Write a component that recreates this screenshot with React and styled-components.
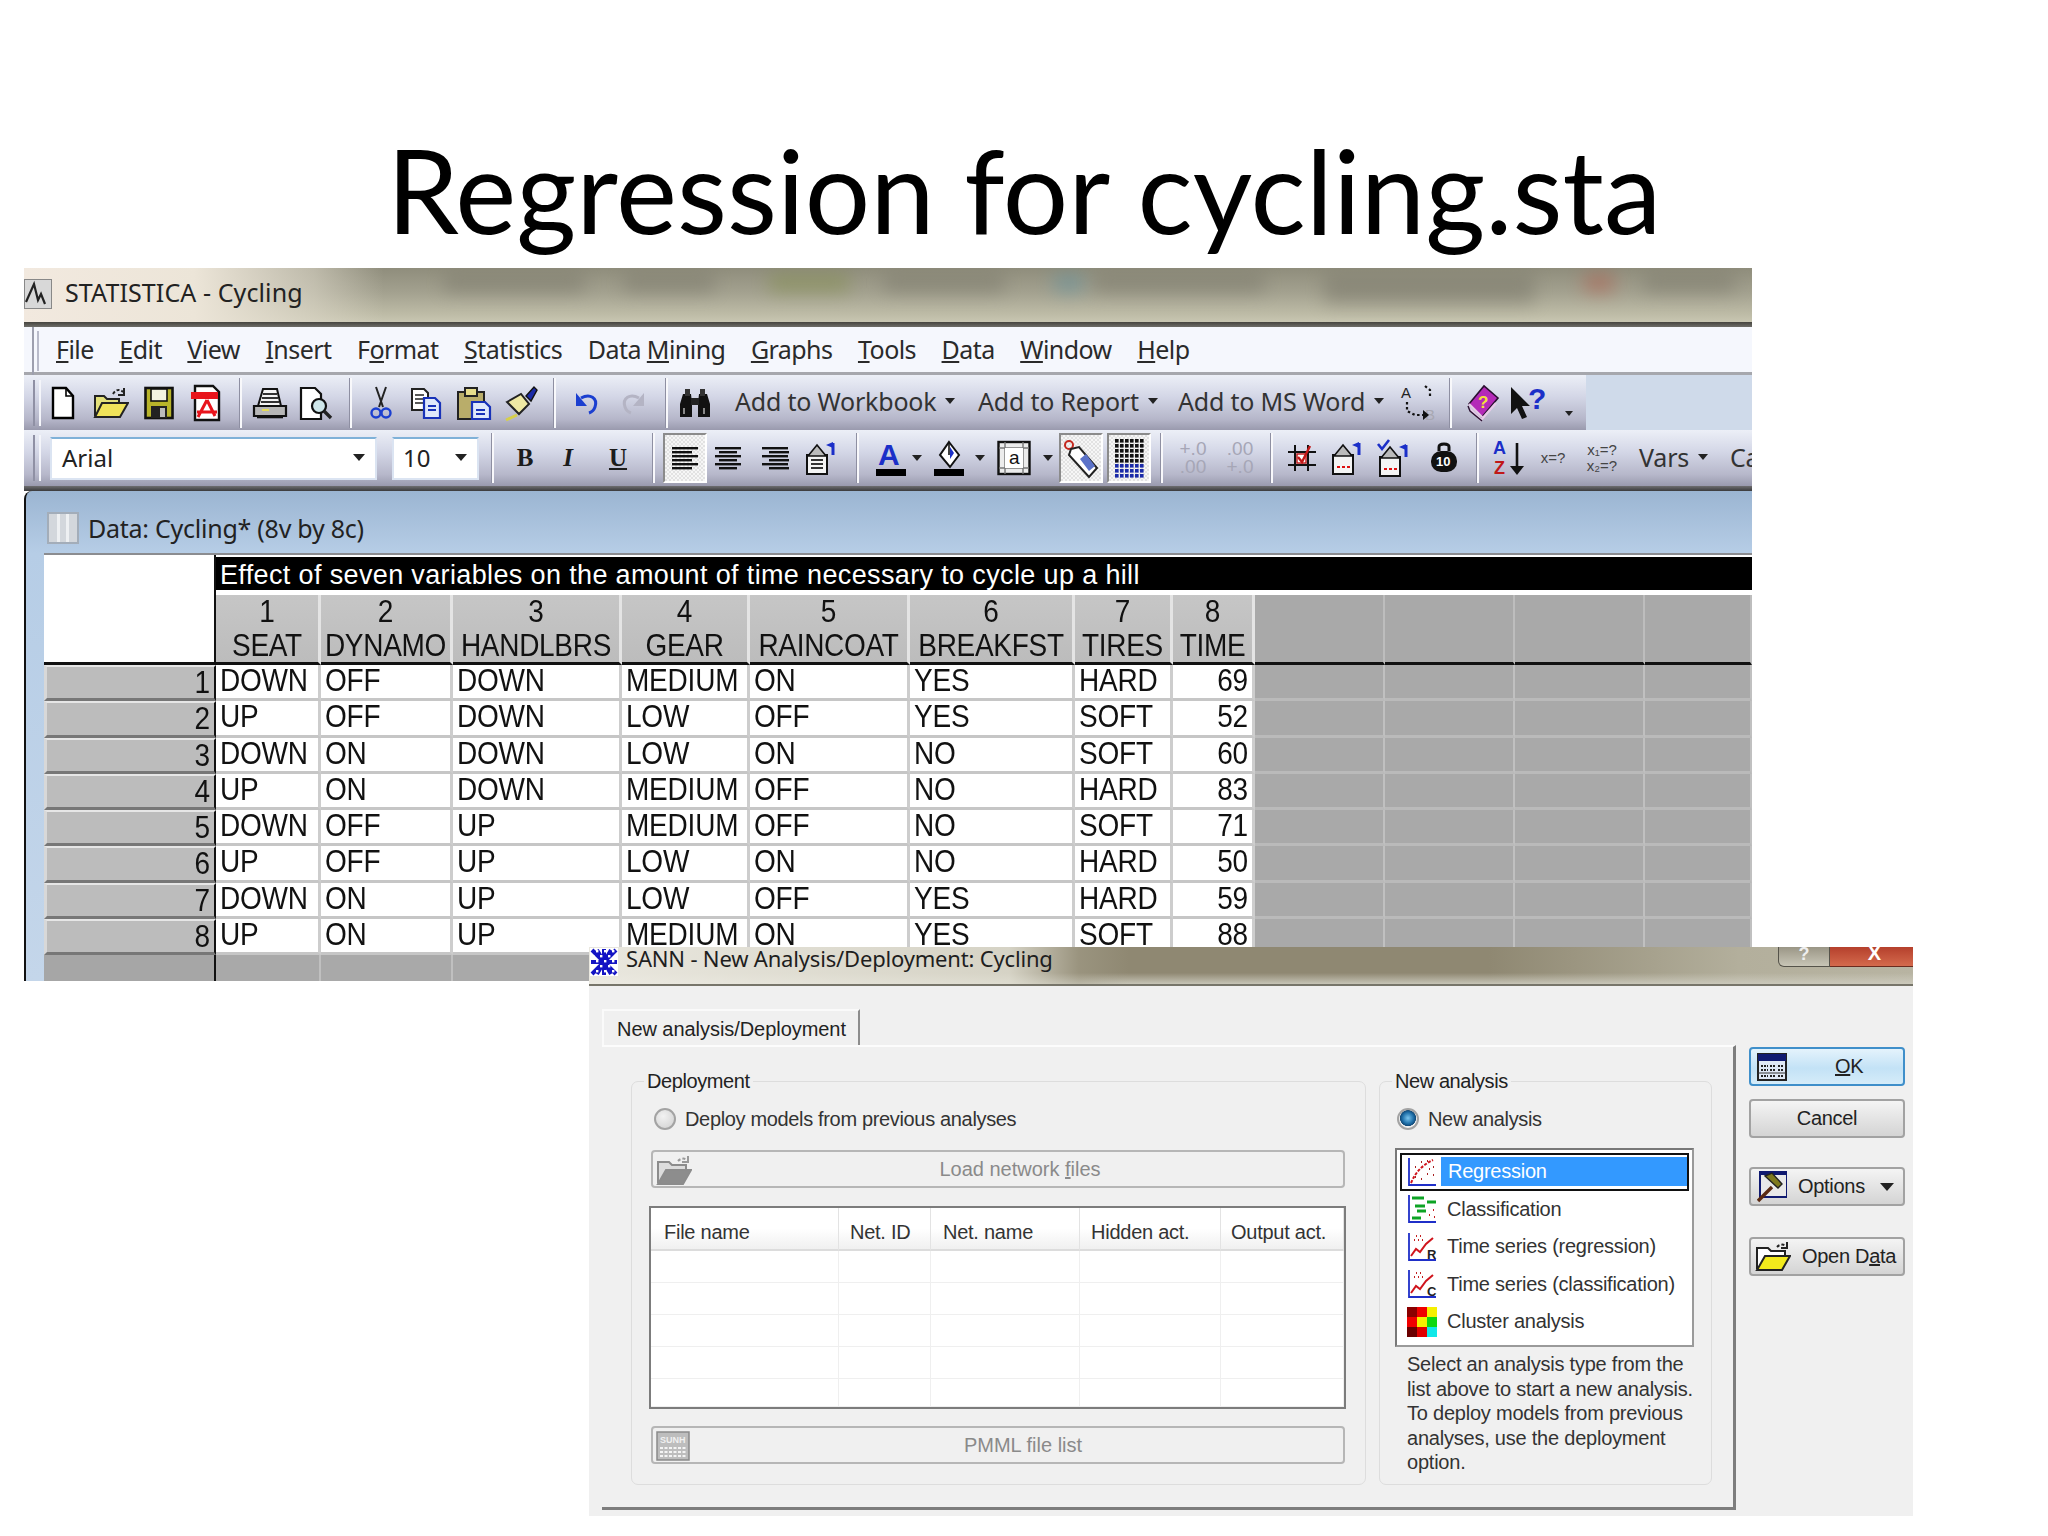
import React from "react";
import styled, { createGlobalStyle } from "styled-components";

const GlobalStyle = createGlobalStyle`
  html, body { margin: 0; padding: 0; background: #fff; }
  body { font-family: "Liberation Sans", Arial, sans-serif; color: #111; }
  * { box-sizing: border-box; }
`;

const Stage = styled.div`
  position: relative;
  width: 2048px;
  height: 1536px;
  overflow: hidden;
  background: #fff;
`;

const Heading = styled.h1`
  margin: 0;
  height: 268px;
  padding-top: 125px;
  text-align: center;
  font-family: Lato, "Noto Sans", sans-serif;
  font-weight: 400;
  font-size: 115.5px;
  line-height: 130px;
  color: #000;
`;

/* main STATISTICA window */
const MainWindow = styled.div`
  width: 1728px;
  height: 713px;
  margin-left: 24px;
  overflow: hidden;
  display: flex;
  flex-direction: column;
  font-family: "Noto Sans", sans-serif;
`;

const AppTitleBar = styled.div`
  position: relative;
  flex: none;
  height: 54px;
  display: flex;
  align-items: center;
  overflow: hidden;
  background: linear-gradient(180deg, #8f8d7c 0%, #a3a18f 45%, #bdbba6 85%, #c8c6b2 100%);
`;

const Glow = styled.div`
  position: absolute;
  left: 0;
  top: 0;
  bottom: 0;
  width: 360px;
  background: linear-gradient(90deg, #f2e9df 0, #ece5d8 170px, rgba(220, 215, 200, 0.6) 290px, rgba(200, 195, 175, 0) 360px);
`;

const Smudge = styled.div`
  position: absolute;
  top: ${(p) => p.$top || 6}px;
  left: ${(p) => p.$x}px;
  width: ${(p) => p.$w}px;
  height: ${(p) => p.$h || 18}px;
  background: ${(p) => p.$c || "#6f6d60"};
  opacity: 0.42;
  filter: blur(9px);
`;

const AppIcon = styled.div`
  position: relative;
  flex: none;
  width: 28px;
  height: 30px;
  margin-top: -2px;
  background: #d8d8d8;
  border: 1px solid #888;
`;

const AppTitle = styled.span`
  position: relative;
  margin: -6px 0 0 13px;
  font-size: 25px;
  letter-spacing: 0.1px;
  color: #222;
`;

const MenuBar = styled.div`
  flex: none;
  height: 53px;
  padding-top: 5px;
  display: flex;
  align-items: flex-start;
  background: linear-gradient(180deg, #45443f 0, #6e6d68 5px, #f5f7fd 5px, #f5f7fd 50px, #a6a7ad 50px);
`;

const Grip = styled.div`
  flex: none;
  width: 15px;
  height: 100%;
  margin-left: 8px;
  border-left: 2px solid #9d9fae;
  position: relative;
  &::after {
    content: "";
    position: absolute;
    left: 3px;
    top: 4px;
    bottom: 4px;
    width: 2px;
    background: #b9bbca;
  }
`;

const MenuList = styled.div`
  display: flex;
  align-items: center;
  height: 43px;
  padding-left: 9px;
  gap: 25.5px;
  font-size: 25px;
  letter-spacing: -0.55px;
  color: #2a2a2a;
`;

const ToolRow = styled.div`
  flex: none;
  height: ${(p) => p.$h || 55}px;
  display: flex;
  align-items: center;
  overflow: hidden;
  background: ${(p) => (p.$flat ? "#cfdaea" : "linear-gradient(180deg, #eceff7 0%, #d3d6e6 40%, #b6b7ca 80%, #9a9aae 100%)")};
`;

const ToolGroup = styled.div`
  flex: none;
  height: 100%;
  display: flex;
  align-items: center;
  background: linear-gradient(180deg, #eceff7 0%, #d3d6e6 40%, #b6b7ca 80%, #9a9aae 100%);
`;

const ToolGrip = styled.div`
  flex: none;
  width: 15px;
  height: 46px;
  padding-left: 9px;
  &::before {
    content: "";
    display: block;
    width: 4px;
    height: 100%;
    border-left: 2px solid #8f90a4;
    border-right: 2px solid #f4f5fa;
  }
`;

const ToolSlot = styled.div`
  flex: none;
  width: ${(p) => p.$w}px;
  height: 46px;
  padding-top: ${(p) => p.$low || 0}px;
  display: flex;
  align-items: center;
  justify-content: center;
`;

const ToggleFace = styled.div`
  width: 44px;
  height: 50px;
  display: flex;
  align-items: center;
  justify-content: center;
  background: repeating-conic-gradient(#f6f6f6 0% 25%, #e2e2e2 0% 50%) 0 0 / 4px 4px;
  border: 2px solid #fff;
  border-top-color: #8b8b8b;
  border-left-color: #8b8b8b;
`;

const ToolSep = styled.div`
  flex: none;
  width: ${(p) => p.$w}px;
  height: 50px;
  display: flex;
  justify-content: center;
  &::before {
    content: "";
    width: 3px;
    height: 100%;
    background: linear-gradient(90deg, #8e8fa2 0 1px, #f8f8fb 1px);
  }
`;

const ToolText = styled.div`
  flex: none;
  width: ${(p) => p.$w}px;
  padding: 0 0 3px ${(p) => p.$pad}px;
  display: flex;
  align-items: center;
  gap: 9px;
  font-size: 25px;
  letter-spacing: -0.2px;
  white-space: nowrap;
  color: #333;
`;

const Caret = styled.i`
  flex: none;
  width: 0;
  height: 0;
  border-left: ${(p) => p.$s || 5}px solid transparent;
  border-right: ${(p) => p.$s || 5}px solid transparent;
  border-top: ${(p) => (p.$s || 5) + 1}px solid #222;
`;

const Combo = styled.div`
  flex: none;
  width: ${(p) => p.$w}px;
  height: 43px;
  margin-left: ${(p) => p.$ml}px;
  padding: 0 10px 2px ${(p) => p.$pl}px;
  display: flex;
  align-items: center;
  justify-content: space-between;
  background: #fff;
  border: 2px solid #dbe4f2;
  border-top-color: #7fb1d8;
  font-size: 24px;
  color: #222;
`;

const FormatMark = styled.span`
  font-family: "Liberation Serif", serif;
  font-size: 25px;
  font-weight: 700;
  font-style: ${(p) => (p.$i ? "italic" : "normal")};
  text-decoration: ${(p) => (p.$u ? "underline" : "none")};
  color: #1c1c1c;
`;

const MutedNote = styled.span`
  font-family: "Liberation Sans", sans-serif;
  font-size: ${(p) => p.$s || 14}px;
  line-height: ${(p) => p.$lh || 14}px;
  color: ${(p) => p.$c || "#444"};
  text-align: center;
  white-space: pre;
`;

const ThickRule = styled.div`
  flex: none;
  height: 5px;
  background: linear-gradient(180deg, #6e6e70, #3a3a3c);
`;

const DocArea = styled.div`
  flex: 1;
  min-height: 0;
  padding-left: 18px;
  border-left: 2px solid #111;
  border-top-left-radius: 8px;
  background: linear-gradient(180deg, #9bb5d2 0, #b6cde6 62px, #c4d6ea 100%);
  overflow: hidden;
`;

const DocCaption = styled.div`
  height: 62px;
  display: flex;
  align-items: center;
  padding: 12px 0 0 3px;
  font-size: 25px;
  letter-spacing: -0.25px;
  color: #222;
`;

const DocIcon = styled.div`
  flex: none;
  width: 32px;
  height: 32px;
  margin-right: 9px;
  background: linear-gradient(90deg, #d3d7dc 0 30%, #eef0f2 30% 38%, #d3d7dc 38% 62%, #eef0f2 62% 70%, #d3d7dc 70%);
  border: 2px solid #a3adb9;
`;

const SheetGrid = styled.div`
  display: grid;
  grid-template-columns: 172px 105px 132px 169px 128px 160px 165px 98px 82px 130px 130px 130px 107px;
  grid-template-rows: 40px 70px repeat(8, 36.25px) 30px;
  border-top: 2px solid #8b8c90;
  background: #fff;
  font-family: "Liberation Sans", Arial, sans-serif;
  font-size: 28px;
  color: #111;
`;

const Tall = styled.span`
  display: inline-block;
  transform: scaleY(1.09);
`;

const Corner = styled.div`
  grid-row: 1 / 3;
  background: #fff;
  border-right: 2px solid #111;
  border-bottom: 3px solid #111;
`;

const SheetTitle = styled.div`
  grid-column: 2 / -1;
  margin-top: 2px;
  height: 33px;
  padding-left: 4px;
  background: #000;
  color: #fff;
  font-size: 27px;
  line-height: 36px;
  letter-spacing: 0.36px;
  white-space: nowrap;
`;

const ColHead = styled.div`
  display: flex;
  flex-direction: column;
  align-items: center;
  line-height: 33.5px;
  background: linear-gradient(180deg, #c6c6c6, #bcbcbc);
  border-right: 3px solid #e4e4e4;
  border-bottom: 3px solid #111;
  white-space: nowrap;
  letter-spacing: -0.3px;
`;

const BlankHead = styled.div`
  background: #a9a9a9;
  border-right: 2px solid #bdbdbd;
  border-bottom: 3px solid #111;
`;

const RowHead = styled.div`
  padding-right: 4px;
  text-align: right;
  line-height: 31px;
  background: #bcbcbc;
  border-top: 2px solid #e6e6e6;
  border-left: 3px solid #d8d8d8;
  border-right: 2px solid #111;
  border-bottom: 3px solid #777;
`;

const Cell = styled.div`
  padding: 0 ${(p) => (p.$num ? 4 : 2)}px 0 ${(p) => (p.$num ? 0 : 4)}px;
  text-align: ${(p) => (p.$num ? "right" : "left")};
  line-height: 31px;
  letter-spacing: -0.2px;
  background: #fff;
  border-right: 3px solid #cdcdcd;
  border-bottom: 3px solid #c6c6c6;
  white-space: nowrap;
`;

const BlankCell = styled.div`
  background: #a9a9a9;
  border-right: 2px solid #c0c0c0;
  border-bottom: 3px solid #bababa;
`;

const FootHead = styled.div`
  background: #a6a6a6;
  border-right: 2px solid #111;
`;

const FootCell = styled.div`
  background: #a9a9a9;
  border-right: 2px solid #c0c0c0;
`;

/* SANN dialog, a window sitting over the data sheet */
const Dialog = styled.div`
  position: absolute;
  left: 589px;
  top: 947px;
  width: 1324px;
  height: 569px;
  display: flex;
  flex-direction: column;
  background: #f0f0f0;
  font-family: "Liberation Sans", Arial, sans-serif;
  font-size: 20px;
  color: #222;
`;

const DialogBar = styled.div`
  flex: none;
  height: 39px;
  display: flex;
  align-items: flex-start;
  border-bottom: 2px solid #77756a;
  background:
    linear-gradient(90deg, rgba(238, 236, 228, 0.95) 0, rgba(226, 224, 212, 0.85) 420px, rgba(170, 165, 145, 0.4) 490px, rgba(143, 136, 114, 0) 540px),
    linear-gradient(180deg, rgba(143, 136, 114, 0) 70%, rgba(205, 203, 190, 0.9) 100%),
    linear-gradient(90deg, #8f8872 0, #8f8872 900px, #b3af9c 1150px, #b8b4a2 100%);
`;

const DialogTitle = styled.span`
  margin-left: 7px;
  line-height: 22px;
  font-family: "Noto Sans", sans-serif;
  font-size: 22px;
  letter-spacing: -0.18px;
  color: #1e1e1e;
`;

const WindowKeys = styled.div`
  margin-left: auto;
  display: flex;
  height: 20px;
`;

const HelpKey = styled.div`
  width: 52px;
  height: 100%;
  border: 1px solid #55534a;
  border-top: 0;
  border-radius: 0 0 0 6px;
  background: linear-gradient(180deg, #9a9686, #c8c5b6);
  color: #eee;
  font-size: 18px;
  font-weight: 700;
  line-height: 14px;
  text-align: center;
  overflow: hidden;
`;

const CloseKey = styled.div`
  width: 83px;
  height: 100%;
  padding-left: 6px;
  border-bottom: 1px solid #6b2a1e;
  background: linear-gradient(180deg, #b5402c, #d46a4d);
  color: #fff;
  font-size: 20px;
  font-weight: 700;
  line-height: 12px;
  text-align: center;
  overflow: hidden;
`;

const DialogBody = styled.div`
  flex: 1;
  padding: 23px 0 0 13px;
  display: flex;
  align-items: flex-start;
`;

const PanelColumn = styled.div`
  flex: none;
  width: 1134px;
`;

const Tab = styled.div`
  width: 258px;
  height: 36px;
  padding-left: 13px;
  line-height: 36px;
  font-size: 20px;
  letter-spacing: -0.05px;
  border-top: 2px solid #fafafa;
  border-left: 2px solid #fafafa;
  border-right: 2px solid #8c8c8c;
  white-space: nowrap;
`;

const Panel = styled.div`
  height: 465px;
  padding: 34px 0 0 29px;
  display: flex;
  gap: 13px;
  border-top: 2px solid #fcfcfc;
  border-right: 3px solid #7d7d7d;
  border-bottom: 3px solid #7d7d7d;
`;

const GroupBox = styled.div`
  position: relative;
  flex: none;
  width: ${(p) => p.$w}px;
  height: 404px;
  padding: 25px 0 0 ${(p) => p.$pl}px;
  border: 1px solid #dddddd;
  border-radius: 7px;
`;

const GroupLabel = styled.span`
  position: absolute;
  left: 12px;
  top: -13px;
  padding: 0 3px;
  line-height: 24px;
  font-size: 20px;
  letter-spacing: -0.42px;
  background: #f0f0f0;
`;

const RadioRow = styled.label`
  height: 24px;
  display: flex;
  align-items: center;
  gap: ${(p) => p.$gap}px;
  margin-left: ${(p) => p.$ml}px;
  font-size: 20px;
  letter-spacing: -0.34px;
  color: #333;
`;

const RadioMark = styled.span`
  flex: none;
  width: 22px;
  height: 22px;
  border-radius: 50%;
  border: 2px solid #a3a3a3;
  background: ${(p) =>
    p.$on
      ? "radial-gradient(circle at 50% 45%, #7cc6ef 0, #1f6fa8 42%, #124a78 58%, #efefef 62%)"
      : "radial-gradient(circle at 40% 35%, #f2f2f2, #cfcfcf)"};
`;

const WideButton = styled.div`
  position: relative;
  width: 694px;
  height: 38px;
  margin-top: ${(p) => p.$mt}px;
  display: flex;
  align-items: center;
  justify-content: center;
  padding-left: ${(p) => p.$shift}px;
  border: 2px solid #b6b6b6;
  border-radius: 4px;
  background: #f0f0f0;
  font-size: 20px;
  color: #8a8a8a;
`;

const WideIcon = styled.span`
  position: absolute;
  left: 3px;
  top: 3px;
`;

const ListView = styled.div`
  width: 697px;
  height: 203px;
  margin: 18px 0 17px -2px;
  background: #fff;
  border: 2px solid #7c7c7c;
  display: grid;
  grid-template-columns: 188px 92px 149px 141px 1fr;
  grid-template-rows: 43px repeat(4, 32px) 1fr;
`;

const ListHead = styled.div`
  padding-left: ${(p) => p.$pl}px;
  line-height: 48px;
  font-size: 20px;
  letter-spacing: -0.25px;
  color: #333;
  background: linear-gradient(180deg, #fff 0, #fff 50%, #f0f0f0 100%);
  border-right: 1px solid #e3e3e3;
  border-bottom: 2px solid #dcdcdc;
`;

const ListCell = styled.div`
  border-right: 1px solid #efefef;
  border-bottom: 1px solid #efefef;
`;

const TypeList = styled.div`
  width: 299px;
  height: 199px;
  margin: 17px 0 0 15px;
  padding: 3px 3px;
  background: #fff;
  border: 2px solid #787878;
  border-right-color: #9a9a9a;
  border-bottom-color: #9a9a9a;
`;

const TypeItem = styled.div`
  height: 37.5px;
  display: flex;
  align-items: center;
  padding-left: 5px;
  border: 2px solid ${(p) => (p.$on ? "#111" : "transparent")};
  font-size: 20px;
  letter-spacing: -0.25px;
  color: #333;
  white-space: nowrap;
`;

const TypeLabel = styled.span`
  margin-left: ${(p) => (p.$on ? 4 : 10)}px;
  padding: 0 0 0 ${(p) => (p.$on ? 7 : 0)}px;
  flex: ${(p) => (p.$on ? 1 : "none")};
  line-height: 29px;
  background: ${(p) => (p.$on ? "#3399ff" : "transparent")};
  color: ${(p) => (p.$on ? "#fff" : "#333")};
`;

const HelpText = styled.p`
  margin: 5px 0 0 27px;
  font-size: 20px;
  line-height: 24.5px;
  letter-spacing: -0.22px;
  color: #333;
  white-space: nowrap;
`;

const SideColumn = styled.div`
  flex: none;
  width: 156px;
  margin: 38px 0 0 13px;
  display: flex;
  flex-direction: column;
`;

const SideButton = styled.div`
  position: relative;
  height: 39px;
  margin-top: ${(p) => p.$mt || 0}px;
  display: flex;
  align-items: center;
  justify-content: ${(p) => (p.$center ? "center" : "flex-start")};
  padding-left: ${(p) => p.$pl || 0}px;
  border: 2px solid ${(p) => (p.$active ? "#3f8fca" : "#a2a2a2")};
  border-radius: 4px;
  background: ${(p) =>
    p.$active
      ? "linear-gradient(180deg, #e4f3fc, #c3e2f6 55%, #d5ecf9)"
      : "linear-gradient(180deg, #f4f4f4, #e4e4e4 50%, #d4d4d4)"};
  font-size: 20px;
  letter-spacing: -0.3px;
  color: #222;
  white-space: nowrap;
`;

const SideLabel = styled.span`
  margin-left: ${(p) => p.$ml}px;
  margin-right: ${(p) => p.$mr || 0}px;
`;

/* toolbar icons */
const Svg = ({ w, h = 34, children }) => (
  <svg width={w} height={h} viewBox={`0 0 ${w} ${h}`} fill="none">
    {children}
  </svg>
);

const NewIcon = () => (
  <Svg w={24}>
    <path d="M2 2h13l7 8v22H2z" fill="#fff" stroke="#000" strokeWidth="2.4" />
    <path d="M15 2v8h7" stroke="#000" strokeWidth="1.6" />
  </Svg>
);
const OpenIcon = () => (
  <Svg w={36}>
    <path d="M2 30V10h9l3 3h12v5" fill="#e3e07a" stroke="#222" strokeWidth="2" />
    <path d="M2 31l7-14h26l-8 14z" fill="#efe25a" stroke="#222" strokeWidth="2" />
    <path d="M20 8c3-5 7-5 10-2" stroke="#222" strokeWidth="2" strokeDasharray="3 2" />
    <path d="M31 2v7h-6" stroke="#222" strokeWidth="2" />
  </Svg>
);
const SaveIcon = () => (
  <Svg w={30}>
    <rect x="1.5" y="2" width="27" height="30" fill="#b8b42a" stroke="#111" strokeWidth="2.6" />
    <rect x="7" y="3" width="16" height="12" fill="#f3f3e0" stroke="#111" strokeWidth="1.6" />
    <rect x="7" y="20" width="16" height="12" fill="#222" />
    <rect x="16" y="22" width="5" height="9" fill="#bbb" />
  </Svg>
);
const PdfIcon = () => (
  <Svg w={34} h={38}>
    <path d="M5 2h18l6 6v28H5z" fill="#fff" stroke="#111" strokeWidth="2.4" />
    <rect x="1" y="8" width="27" height="7" fill="#e8141c" />
    <path d="M17 16l-9 17M17 16l8 16M7 28h20" stroke="#e8141c" strokeWidth="3" />
  </Svg>
);
const PrintIcon = () => (
  <Svg w={36}>
    <path d="M6 20l5-17h14l4 17" fill="#f4f4f4" stroke="#111" strokeWidth="2" />
    <path d="M11 8h14M10 12h16M9 16h18" stroke="#333" strokeWidth="1.8" />
    <path d="M2 20h32v10H2z" fill="#b7b7b7" stroke="#111" strokeWidth="2.2" />
    <path d="M5 31h26" stroke="#111" strokeWidth="2.6" />
    <rect x="10" y="23" width="7" height="2" fill="#e5dc59" />
  </Svg>
);
const PreviewIcon = () => (
  <Svg w={36}>
    <path d="M3 2h14l6 6v25H3z" fill="#fff" stroke="#111" strokeWidth="2.2" />
    <circle cx="21" cy="20" r="7" fill="#cfe7ea" stroke="#111" strokeWidth="2.2" />
    <path d="M26 25l7 7" stroke="#222" strokeWidth="3.4" />
  </Svg>
);
const CutIcon = () => (
  <Svg w={22} h={36}>
    <path d="M6 2l7 20M16 2L9 22" stroke="#222" strokeWidth="2" />
    <circle cx="6" cy="28" r="4.5" stroke="#1b3fd0" strokeWidth="2.4" />
    <circle cx="16" cy="28" r="4.5" stroke="#1b3fd0" strokeWidth="2.4" />
  </Svg>
);
const CopyIcon = () => (
  <Svg w={34}>
    <path d="M3 3h12l4 4v17H3z" fill="#fff" stroke="#222" strokeWidth="2" />
    <path d="M6 9h9M6 13h9M6 17h9" stroke="#222" strokeWidth="1.6" />
    <path d="M15 12h11l5 5v15H15z" fill="#dfe8fb" stroke="#1832b8" strokeWidth="2.2" />
    <path d="M19 20h8M19 24h8" stroke="#1832b8" strokeWidth="1.8" />
  </Svg>
);
const PasteIcon = () => (
  <Svg w={36}>
    <rect x="2" y="6" width="26" height="27" fill="#b9ad6a" stroke="#222" strokeWidth="2" />
    <rect x="9" y="2" width="12" height="8" fill="#e5dc8c" stroke="#222" strokeWidth="2" />
    <path d="M16 16h13l5 5v12H16z" fill="#dfe8fb" stroke="#1832b8" strokeWidth="2.2" />
    <path d="M20 24h9M20 28h9" stroke="#1832b8" strokeWidth="1.8" />
  </Svg>
);
const BrushIcon = () => (
  <Svg w={36} h={38}>
    <path d="M4 18l14-8 8 10-10 10z" fill="#efe9a4" stroke="#222" strokeWidth="2" />
    <path d="M23 12l8-9 3 3-6 11z" fill="#1a2aa8" stroke="#111" strokeWidth="1.4" />
    <path d="M14 31L3 36" stroke="#d6cf4a" strokeWidth="3" />
  </Svg>
);
const UndoIcon = () => (
  <Svg w={28} h={26}>
    <path d="M8 8c9-5 17 0 14 9-1 3-3 5-6 6" stroke="#1b3fd0" strokeWidth="3" />
    <path d="M3 3v13h11z" fill="#1b3fd0" />
  </Svg>
);
const RedoIcon = () => (
  <Svg w={28} h={26}>
    <path d="M20 8c-9-5-17 0-14 9 1 3 3 5 6 6" stroke="#b4b4c4" strokeWidth="3" />
    <path d="M25 3v13H14z" fill="#b4b4c4" />
  </Svg>
);
const BinocularIcon = () => (
  <Svg w={34}>
    <path d="M5 8h8l1 9v14H2V18zM21 8h8l3 10v13H20V17z" fill="#111" />
    <path d="M7 3h5v7H7zM22 3h5v7h-5z" fill="#333" />
    <rect x="13" y="12" width="8" height="7" fill="#222" />
    <path d="M6 22v6M26 22v6" stroke="#888" strokeWidth="2" />
  </Svg>
);
const AbIcon = () => (
  <Svg w={36} h={38}>
    <text x="1" y="14" fontFamily="Liberation Sans" fontSize="15" fill="#222">A</text>
    <text x="25" y="36" fontFamily="Liberation Sans" fontSize="15" fill="#a8a8b2">B</text>
    <path d="M25 2l5 4v8M7 18v9l8 4h8" stroke="#111" strokeWidth="2.2" strokeDasharray="2.5 2.5" />
    <path d="M23 26l6 5-6 5z" fill="#111" />
  </Svg>
);
const BookIcon = () => (
  <Svg w={36} h={38}>
    <path d="M4 20L19 2l14 12-16 19z" fill="#b42ab8" stroke="#2a1030" strokeWidth="1.6" />
    <path d="M4 20l13 13M5 25l11 11 15-17" stroke="#e7cbe8" strokeWidth="2.4" />
    <path d="M3 22l2 5 12 10" stroke="#2a1030" strokeWidth="1.4" />
    <text x="13" y="24" fontFamily="Liberation Sans" fontWeight="700" fontSize="17" fill="#f3e23a">?</text>
  </Svg>
);
const HelpArrowIcon = () => (
  <Svg w={40} h={38}>
    <path d="M2 3v27l6-6 5 11 5-2-5-11h8z" fill="#111" />
    <text x="19" y="25" fontFamily="Liberation Sans" fontWeight="700" fontSize="30" fill="#1b2fc8">?</text>
  </Svg>
);
const lineSpans = {
  left: [1, 20],
  center: [5, 22],
  right: [8, 27],
};
const Lines = ({ mode }) => {
  const [start, end] = lineSpans[mode];
  return (
    <Svg w={28} h={28}>
      {[0, 1, 2, 3, 4, 5].map((i) => (
        <rect key={i} x={i % 2 ? start : 1} y={3 + i * 4} width={i % 2 ? end - start + 1 : 26} height="2.4" fill="#111" />
      ))}
    </Svg>
  );
};
const CellFormatIcon = () => (
  <Svg w={36} h={36}>
    <rect x="4" y="15" width="20" height="19" fill="#f4f4f4" stroke="#111" strokeWidth="2" />
    <path d="M8 20h12M8 24h12M8 28h12" stroke="#333" strokeWidth="1.8" />
    <path d="M5 16l9-11 9 11z" fill="#bbb" stroke="#111" strokeWidth="1.6" />
    <path d="M30 3v12" stroke="#1b2fc8" strokeWidth="3" />
    <path d="M23 5l7-3v6z" fill="#1b2fc8" />
  </Svg>
);
const RedRowFormatIcon = () => (
  <Svg w={36} h={36}>
    <rect x="4" y="15" width="20" height="19" fill="#f4f4f4" stroke="#111" strokeWidth="2" />
    <path d="M8 27h3M13 27h3M18 27h3" stroke="#d11" strokeWidth="2" />
    <path d="M5 16l9-11 9 11z" fill="#bbb" stroke="#111" strokeWidth="1.6" />
    <path d="M30 3v12" stroke="#1b2fc8" strokeWidth="3" />
    <path d="M23 5l7-3v6z" fill="#1b2fc8" />
  </Svg>
);
const CheckFormatIcon = () => (
  <Svg w={36} h={40}>
    <path d="M2 6l4 5 7-9" stroke="#1b2fc8" strokeWidth="2.6" />
    <rect x="4" y="19" width="20" height="19" fill="#f4f4f4" stroke="#111" strokeWidth="2" />
    <path d="M8 31h3M13 31h3M18 31h3" stroke="#d11" strokeWidth="2" />
    <path d="M5 20l9-11 9 11z" fill="#bbb" stroke="#111" strokeWidth="1.6" />
    <path d="M30 7v12" stroke="#1b2fc8" strokeWidth="3" />
    <path d="M23 9l7-3v6z" fill="#1b2fc8" />
  </Svg>
);
const LetterA = () => (
  <Svg w={30} h={38}>
    <text x="2" y="26" fontFamily="Liberation Sans" fontWeight="700" fontSize="30" fill="#1b2fc8">A</text>
    <rect x="0" y="30" width="30" height="7" fill="#000" />
  </Svg>
);
const FillIcon = () => (
  <Svg w={32} h={38}>
    <path d="M16 3l10 13-9 12-10-12z" fill="#fff" stroke="#111" strokeWidth="2" />
    <path d="M16 3v13" stroke="#111" strokeWidth="1.6" />
    <path d="M17 8l4 6-4 6z" fill="#1b2fc8" />
    <rect x="1" y="30" width="30" height="7" fill="#000" />
  </Svg>
);
const BoxIcon = () => (
  <Svg w={34} h={36}>
    <rect x="1.5" y="2" width="31" height="32" fill="#ececec" stroke="#111" strokeWidth="2.4" />
    <path d="M2 8h30M2 28h30M8 2v32M26 2v32" stroke="#777" strokeWidth="1.4" />
    <rect x="8" y="8" width="18" height="20" fill="#fff" />
    <text x="12" y="24" fontFamily="Liberation Sans" fontSize="19" fill="#111">a</text>
  </Svg>
);
const TagIcon = () => (
  <Svg w={36} h={42}>
    <circle cx="6" cy="8" r="4" stroke="#c4281e" strokeWidth="2" />
    <path d="M8 12l8-2 18 21-8 9L6 18z" fill="#fff" stroke="#222" strokeWidth="2" />
    <path d="M17 22l9 12 6-5-9-12z" fill="#5b72c9" />
  </Svg>
);
const DotGridIcon = () => (
  <Svg w={32} h={42}>
    {Array.from({ length: 8 }, (_, r) =>
      Array.from({ length: 6 }, (_, c) => (
        <rect key={`${r}-${c}`} x={2 + c * 5} y={2 + r * 5} width="3.6" height="3.6" fill={r < 5 ? "#111" : "#1a2aa8"} />
      ))
    )}
  </Svg>
);
const HashIcon = () => (
  <Svg w={30} h={30}>
    <path d="M8 2v26M21 2v26M1 9h28M1 22h28" stroke="#111" strokeWidth="2" />
    <rect x="10" y="11" width="9" height="9" fill="#fff" stroke="#c31818" strokeWidth="1.4" />
    <path d="M11 14l4 5 8-16" stroke="#c31818" strokeWidth="2.4" />
  </Svg>
);
const WeightIcon = () => (
  <Svg w={32} h={32}>
    <path d="M11 9V5c0-4 10-4 10 0v4" stroke="#111" strokeWidth="3" />
    <rect x="3" y="9" width="26" height="21" rx="10" fill="#111" />
    <text x="8" y="24" fontFamily="Liberation Sans" fontWeight="700" fontSize="13" fill="#fff">10</text>
  </Svg>
);
const SortIcon = () => (
  <Svg w={36} h={42}>
    <text x="2" y="17" fontFamily="Liberation Sans" fontWeight="700" fontSize="18" fill="#1b2fc8">A</text>
    <text x="3" y="37" fontFamily="Liberation Sans" fontWeight="700" fontSize="18" fill="#c01818">Z</text>
    <path d="M26 6v28" stroke="#111" strokeWidth="2.6" />
    <path d="M19 29h14l-7 9z" fill="#111" />
  </Svg>
);
const FolderIcon = ({ muted }) => (
  <Svg w={36} h={32}>
    <path d="M2 28V7h11l3 3h14v5" fill={muted ? "#dcdcdc" : "#fff"} stroke={muted ? "#8c8c8c" : "#222"} strokeWidth="2" />
    <path d="M2 29l8-14h25l-8 14z" fill={muted ? "#8d8d8d" : "#f2ea1c"} stroke={muted ? "#8c8c8c" : "#222"} strokeWidth="2" />
    <path d="M22 6c3-3 7-3 9-1" stroke={muted ? "#999" : "#222"} strokeWidth="2" strokeDasharray="3 2" />
    <path d="M32 1v6h-6" stroke={muted ? "#999" : "#222"} strokeWidth="2" />
  </Svg>
);
const KeypadIcon = () => (
  <Svg w={34} h={30}>
    <rect x="1" y="1" width="32" height="28" fill="#bdbdbd" stroke="#8a8a8a" strokeWidth="1.5" />
    <text x="4" y="12" fontFamily="Liberation Sans" fontWeight="700" fontSize="9" fill="#f0f0f0">SUNH</text>
    {[16, 20, 24].map((y) => (
      <path key={y} d={`M4 ${y + 1}h26`} stroke="#f4f4f4" strokeWidth="2" strokeDasharray="3 1.5" />
    ))}
  </Svg>
);
const sannDots = [
  [7, 3], [15, 3], [23, 3], [3, 8], [11, 8], [19, 8], [26, 8], [7, 13], [15, 13], [23, 13],
  [3, 18], [11, 18], [19, 18], [26, 18], [7, 23], [15, 23], [23, 23],
];
const SannIcon = () => (
  <Svg w={30} h={30}>
    <rect x="1" y="1" width="28" height="28" fill="#fff" />
    <path d="M3 3l24 24M27 3L3 27M15 2v26M2 15h26M8 3l14 24M22 3L8 27" stroke="#1414c4" strokeWidth="4" />
    {sannDots.map(([x, y]) => (
      <rect key={`${x}-${y}`} x={x} y={y} width="2.4" height="2.4" fill="#fff" />
    ))}
  </Svg>
);
const SheetIcon = () => (
  <Svg w={30} h={28}>
    <rect x="1" y="1" width="28" height="26" fill="#dfe8f5" stroke="#222" strokeWidth="2" />
    <rect x="1" y="1" width="28" height="7" fill="#101a70" />
    <path d="M4 13h7M13 13h6M21 13h5M4 17h7M13 17h6M21 17h5" stroke="#222" strokeWidth="2" strokeDasharray="2 1" />
    <path d="M1 20h28" stroke="#333" />
    <path d="M4 23h7M13 23h6M21 23h5" stroke="#222" strokeWidth="2" strokeDasharray="2 1" />
  </Svg>
);
const HammerIcon = () => (
  <Svg w={30} h={32}>
    <rect x="3" y="0" width="27" height="26" fill="#e9e9e9" stroke="#101a70" strokeWidth="2" />
    <rect x="4" y="0" width="25" height="4" fill="#101a70" />
    <path d="M1 30l14-14" stroke="#5a2a12" strokeWidth="3.4" />
    <path d="M8 5l7-3 10 11-4 4z" fill="#7f7a1e" stroke="#222" strokeWidth="1.4" />
  </Svg>
);
const RegressionType = () => (
  <Svg w={30} h={30}>
    <path d="M2 1v27h27" stroke="#1f2fc8" strokeWidth="1.8" />
    <path d="M4 26C9 14 16 8 26 3" stroke="#d0141c" strokeWidth="2" strokeDasharray="3 1.5" />
    <path d="M8 10h1M14 5h1M20 4h1M22 12h1M26 10h1M14 22h1M8 20h1M20 17h1M26 18h1" stroke="#a82020" strokeWidth="2" />
  </Svg>
);
const ClassifyType = () => (
  <Svg w={30} h={30}>
    <path d="M2 1v27h27" stroke="#1f2fc8" strokeWidth="1.8" />
    <path d="M5 4h12M20 8h9M8 12h10M10 17h9M5 24h9" stroke="#0da324" strokeWidth="3" />
    <path d="M26 16h1M22 21h1M27 23h1" stroke="#c42020" strokeWidth="2" />
  </Svg>
);
const SeriesType = ({ letter }) => (
  <Svg w={30} h={30}>
    <path d="M2 1v27h27" stroke="#1f2fc8" strokeWidth="1.8" />
    <path d="M4 24l5-7 4 3 6-8 7-6" stroke="#d0141c" strokeWidth="2" />
    <path d="M9 4h1M13 4h1M11 8h1M7 8h1M15 8h1" stroke="#c42020" strokeWidth="2" />
    <text x="20" y="27" fontFamily="Liberation Sans" fontWeight="700" fontSize="13" fill="#222">{letter}</text>
  </Svg>
);
const ClusterType = () => {
  const colors = [
    ["#8a0000", "#f00000", "#f6f000"],
    ["#f00000", "#f6f000", "#10d810"],
    ["#6a0000", "#e00000", "#10e8e8"],
  ];
  return (
    <Svg w={30} h={30}>
      {colors.map((row, r) =>
        row.map((c, i) => <rect key={`${r}${i}`} x={i * 10} y={r * 10} width="10" height="10" fill={c} />)
      )}
    </Svg>
  );
};

const columns = [
  ["1", "SEAT"],
  ["2", "DYNAMO"],
  ["3", "HANDLBRS"],
  ["4", "GEAR"],
  ["5", "RAINCOAT"],
  ["6", "BREAKFST"],
  ["7", "TIRES"],
  ["8", "TIME"],
];

const rows = [
  ["DOWN", "OFF", "DOWN", "MEDIUM", "ON", "YES", "HARD", "69"],
  ["UP", "OFF", "DOWN", "LOW", "OFF", "YES", "SOFT", "52"],
  ["DOWN", "ON", "DOWN", "LOW", "ON", "NO", "SOFT", "60"],
  ["UP", "ON", "DOWN", "MEDIUM", "OFF", "NO", "HARD", "83"],
  ["DOWN", "OFF", "UP", "MEDIUM", "OFF", "NO", "SOFT", "71"],
  ["UP", "OFF", "UP", "LOW", "ON", "NO", "HARD", "50"],
  ["DOWN", "ON", "UP", "LOW", "OFF", "YES", "HARD", "59"],
  ["UP", "ON", "UP", "MEDIUM", "ON", "YES", "SOFT", "88"],
];

const blanks = [0, 1, 2, 3];

const listColumns = [
  ["File name", 13],
  ["Net. ID", 11],
  ["Net. name", 12],
  ["Hidden act.", 11],
  ["Output act.", 10],
];

const App = () => {
  return (
    <Stage>
      <GlobalStyle />
      <Heading>Regression for cycling.sta</Heading>

      <MainWindow>
        <AppTitleBar>
          <Smudge $x={420} $w={140} />
          <Smudge $x={600} $w={90} />
          <Smudge $x={745} $w={80} $c="#7b8b3a" />
          <Smudge $x={860} $w={120} />
          <Smudge $x={1030} $w={30} $c="#4d8fa8" />
          <Smudge $x={1070} $w={170} />
          <Smudge $x={1300} $w={210} $h={30} />
          <Smudge $x={1560} $w={30} $c="#b84a3a" />
          <Smudge $x={1620} $w={90} />
          <Glow />
          <AppIcon>
            <svg width="26" height="28" viewBox="0 0 26 28" fill="none">
              <path d="M1 22L9 4l4 16 3-6 4 10" stroke="#222" strokeWidth="2.2" />
            </svg>
          </AppIcon>
          <AppTitle>STATISTICA - Cycling</AppTitle>
        </AppTitleBar>

        <MenuBar>
          <Grip />
          <MenuList>
            <span><u>F</u>ile</span>
            <span><u>E</u>dit</span>
            <span><u>V</u>iew</span>
            <span><u>I</u>nsert</span>
            <span>F<u>o</u>rmat</span>
            <span><u>S</u>tatistics</span>
            <span>Data <u>M</u>ining</span>
            <span><u>G</u>raphs</span>
            <span><u>T</u>ools</span>
            <span><u>D</u>ata</span>
            <span><u>W</u>indow</span>
            <span><u>H</u>elp</span>
          </MenuList>
        </MenuBar>

        <ToolRow $flat>
          <ToolGroup>
            <ToolGrip />
            <ToolSlot $w={48}><NewIcon /></ToolSlot>
            <ToolSlot $w={48}><OpenIcon /></ToolSlot>
            <ToolSlot $w={47}><SaveIcon /></ToolSlot>
            <ToolSlot $w={50}><PdfIcon /></ToolSlot>
            <ToolSep $w={16} />
            <ToolSlot $w={44}><PrintIcon /></ToolSlot>
            <ToolSlot $w={48}><PreviewIcon /></ToolSlot>
            <ToolSep $w={20} />
            <ToolSlot $w={42}><CutIcon /></ToolSlot>
            <ToolSlot $w={48}><CopyIcon /></ToolSlot>
            <ToolSlot $w={48}><PasteIcon /></ToolSlot>
            <ToolSlot $w={46}><BrushIcon /></ToolSlot>
            <ToolSep $w={20} />
            <ToolSlot $w={46}><UndoIcon /></ToolSlot>
            <ToolSlot $w={46}><RedoIcon /></ToolSlot>
            <ToolSep $w={20} />
            <ToolSlot $w={38}><BinocularIcon /></ToolSlot>
            <ToolText $w={254} $pad={21}>Add to Workbook <Caret /></ToolText>
            <ToolText $w={200} $pad={10}>Add to Report <Caret /></ToolText>
            <ToolText $w={228} $pad={10}>Add to MS Word <Caret /></ToolText>
            <ToolSlot $w={44}><AbIcon /></ToolSlot>
            <ToolSep $w={20} />
            <ToolSlot $w={46}><BookIcon /></ToolSlot>
            <ToolSlot $w={46}><HelpArrowIcon /></ToolSlot>
            <ToolSlot $w={34} $low={22}><Caret $s={4} /></ToolSlot>
          </ToolGroup>
        </ToolRow>

        <ToolRow $h={56}>
          <ToolGrip />
          <Combo $w={327} $ml={11} $pl={10}>Arial <Caret $s={6} /></Combo>
          <Combo $w={87} $ml={15} $pl={9}>10 <Caret $s={6} /></Combo>
          <ToolSep $w={26} />
          <ToolSlot $w={40}><FormatMark>B</FormatMark></ToolSlot>
          <ToolSlot $w={46}><FormatMark $i>I</FormatMark></ToolSlot>
          <ToolSlot $w={54}><FormatMark $u>U</FormatMark></ToolSlot>
          <ToolSep $w={16} />
          <ToolSlot $w={48}><ToggleFace><Lines mode="left" /></ToggleFace></ToolSlot>
          <ToolSlot $w={38}><Lines mode="center" /></ToolSlot>
          <ToolSlot $w={56}><Lines mode="right" /></ToolSlot>
          <ToolSlot $w={36}><CellFormatIcon /></ToolSlot>
          <ToolSep $w={36} />
          <ToolSlot $w={32}><LetterA /></ToolSlot>
          <ToolSlot $w={20}><Caret /></ToolSlot>
          <ToolSlot $w={44}><FillIcon /></ToolSlot>
          <ToolSlot $w={18}><Caret /></ToolSlot>
          <ToolSlot $w={50}><BoxIcon /></ToolSlot>
          <ToolSlot $w={18}><Caret /></ToolSlot>
          <ToolSlot $w={48}><ToggleFace><TagIcon /></ToggleFace></ToolSlot>
          <ToolSlot $w={47}><ToggleFace><DotGridIcon /></ToggleFace></ToolSlot>
          <ToolSep $w={18} />
          <ToolSlot $w={46}><MutedNote $s={19} $lh={18} $c="#a6a6b6">{"+.0\n.00"}</MutedNote></ToolSlot>
          <ToolSlot $w={48}><MutedNote $s={19} $lh={18} $c="#a6a6b6">{".00\n+.0"}</MutedNote></ToolSlot>
          <ToolSep $w={14} />
          <ToolSlot $w={48}><HashIcon /></ToolSlot>
          <ToolSlot $w={42}><RedRowFormatIcon /></ToolSlot>
          <ToolSlot $w={52}><CheckFormatIcon /></ToolSlot>
          <ToolSlot $w={48}><WeightIcon /></ToolSlot>
          <ToolSep $w={18} />
          <ToolSlot $w={46}><SortIcon /></ToolSlot>
          <ToolSlot $w={42}><MutedNote $s={15}>x=?</MutedNote></ToolSlot>
          <ToolSlot $w={56}><MutedNote $s={15} $lh={16}>{"x\u2081=?\nx\u2082=?"}</MutedNote></ToolSlot>
          <ToolText $w={86} $pad={9}>Vars <Caret /></ToolText>
          <ToolText $w={60} $pad={14}>Ca</ToolText>
        </ToolRow>

        <ThickRule />

        <DocArea>
          <DocCaption>
            <DocIcon />
            Data: Cycling* (8v by 8c)
          </DocCaption>
          <SheetGrid>
            <Corner />
            <SheetTitle>Effect of seven variables on the amount of time necessary to cycle up a hill</SheetTitle>
            {columns.map((c) => (
              <ColHead key={c[0]}>
                <Tall>{c[0]}</Tall>
                <Tall>{c[1]}</Tall>
              </ColHead>
            ))}
            {blanks.map((b) => (
              <BlankHead key={b} />
            ))}
            {rows.map((row, i) => (
              <React.Fragment key={i}>
                <RowHead><Tall>{i + 1}</Tall></RowHead>
                {row.map((value, j) => (
                  <Cell key={j} $num={j === 7}><Tall>{value}</Tall></Cell>
                ))}
                {blanks.map((b) => (
                  <BlankCell key={b} />
                ))}
              </React.Fragment>
            ))}
            <FootHead />
            {columns.map((c) => (
              <FootCell key={c[0]} />
            ))}
            {blanks.map((b) => (
              <FootCell key={b} />
            ))}
          </SheetGrid>
        </DocArea>
      </MainWindow>

      <Dialog>
        <DialogBar>
          <SannIcon />
          <DialogTitle>SANN - New Analysis/Deployment: Cycling</DialogTitle>
          <WindowKeys>
            <HelpKey>?</HelpKey>
            <CloseKey>X</CloseKey>
          </WindowKeys>
        </DialogBar>
        <DialogBody>
          <PanelColumn>
            <Tab>New analysis/Deployment</Tab>
            <Panel>
              <GroupBox $w={735} $pl={19}>
                <GroupLabel>Deployment</GroupLabel>
                <RadioRow $gap={9} $ml={3}>
                  <RadioMark />
                  Deploy models from previous analyses
                </RadioRow>
                <WideButton $mt={19} $shift={44}>
                  <WideIcon><FolderIcon muted /></WideIcon>
                  <span>Load network <u>f</u>iles</span>
                </WideButton>
                <ListView>
                  {listColumns.map((c) => (
                    <ListHead key={c[0]} $pl={c[1]}>{c[0]}</ListHead>
                  ))}
                  {Array.from({ length: 25 }, (_, i) => (
                    <ListCell key={i} />
                  ))}
                </ListView>
                <WideButton $mt={0} $shift={50}>
                  <WideIcon><KeypadIcon /></WideIcon>
                  PMML file list
                </WideButton>
              </GroupBox>

              <GroupBox $w={333} $pl={0}>
                <GroupLabel>New analysis</GroupLabel>
                <RadioRow $gap={9} $ml={17}>
                  <RadioMark $on />
                  New analysis
                </RadioRow>
                <TypeList>
                  <TypeItem $on>
                    <RegressionType />
                    <TypeLabel $on>Regression</TypeLabel>
                  </TypeItem>
                  <TypeItem>
                    <ClassifyType />
                    <TypeLabel>Classification</TypeLabel>
                  </TypeItem>
                  <TypeItem>
                    <SeriesType letter="R" />
                    <TypeLabel>Time series (regression)</TypeLabel>
                  </TypeItem>
                  <TypeItem>
                    <SeriesType letter="C" />
                    <TypeLabel>Time series (classification)</TypeLabel>
                  </TypeItem>
                  <TypeItem>
                    <ClusterType />
                    <TypeLabel>Cluster analysis</TypeLabel>
                  </TypeItem>
                </TypeList>
                <HelpText>
                  Select an analysis type from the
                  <br />
                  list above to start a new analysis.
                  <br />
                  To deploy models from previous
                  <br />
                  analyses, use the deployment
                  <br />
                  option.
                </HelpText>
              </GroupBox>
            </Panel>
          </PanelColumn>

          <SideColumn>
            <SideButton $active $pl={6}>
              <SheetIcon />
              <SideLabel $ml={48}>
                <u>O</u>K
              </SideLabel>
            </SideButton>
            <SideButton $center $mt={13}>Cancel</SideButton>
            <SideButton $mt={29} $pl={6}>
              <HammerIcon />
              <SideLabel $ml={11} $mr={15}>Options</SideLabel>
              <Caret $s={7} />
            </SideButton>
            <SideButton $mt={31} $pl={4}>
              <FolderIcon />
              <SideLabel $ml={11}>
                Open D<u>a</u>ta
              </SideLabel>
            </SideButton>
          </SideColumn>
        </DialogBody>
      </Dialog>
    </Stage>
  );
};

export default App;
